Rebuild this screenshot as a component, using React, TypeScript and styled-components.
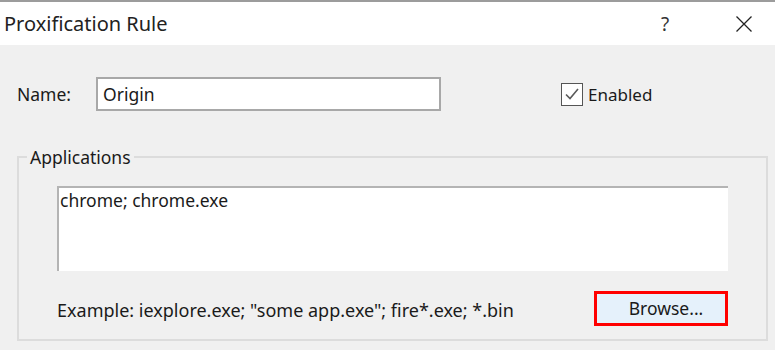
import styled, { createGlobalStyle } from 'styled-components';

const GlobalStyle = createGlobalStyle`
  html, body {
    margin: 0;
    padding: 0;
    background: #f0f0f0;
  }
  * {
    box-sizing: border-box;
  }
`;

const FONT = `'Noto Sans', 'Open Sans', sans-serif`;

function CheckIcon() {
  return (
    <svg width="18" height="18" viewBox="0 0 18 18">
      <path d="M3 9.5 L7 13.5 L15 4" fill="none" stroke="#5a5a5a" strokeWidth="1.6" />
    </svg>
  );
}

function CloseIcon() {
  return (
    <svg width="18" height="18" viewBox="0 0 18 18">
      <path d="M1.5 1.5 L16.5 16.5 M16.5 1.5 L1.5 16.5" stroke="#222" strokeWidth="1.3" />
    </svg>
  );
}

function App() {
  return (
    <>
      <GlobalStyle />
      <StWindow>
        <StTitleBar>
          <StTitle>Proxification Rule</StTitle>
          <StTitleButtons>
            <StHelp>?</StHelp>
            <StClose>
              <CloseIcon />
            </StClose>
          </StTitleButtons>
        </StTitleBar>
        <StBody>
          <StNameRow>
            <StLabel>Name:</StLabel>
            <StNameInput defaultValue="Origin" />
            <StCheckLabel>
              <StCheckBox>
                <CheckIcon />
              </StCheckBox>
              <span>Enabled</span>
            </StCheckLabel>
          </StNameRow>
          <StGroup>
            <StLegend>Applications</StLegend>
            <StGroupContent>
              <StAppsBox defaultValue="chrome; chrome.exe" />
              <StBottomRow>
                <StHint>Example: iexplore.exe; "some app.exe"; fire*.exe; *.bin</StHint>
                <StBrowse>Browse...</StBrowse>
              </StBottomRow>
            </StGroupContent>
          </StGroup>
        </StBody>
      </StWindow>
    </>
  );
}

export default App;

const StWindow = styled.div`
  width: 775px;
  height: 350px;
  border-top: 2px solid #9c9c9c;
  background: #f0f0f0;
  font-family: ${FONT};
  color: #1a1a1a;
  overflow: hidden;
`;

const StTitleBar = styled.div`
  display: flex;
  align-items: center;
  justify-content: space-between;
  height: 43px;
  padding-left: 4px;
  background: #ffffff;
`;

const StTitle = styled.div`
  font-size: 20px;
  color: #222;
  padding-bottom: 1px;
`;

const StTitleButtons = styled.div`
  display: flex;
  align-items: center;
  height: 100%;
`;

const StHelp = styled.div`
  width: 80px;
  margin-right: 8px;
  text-align: center;
  font-size: 19px;
  color: #333;
`;

const StClose = styled.div`
  display: flex;
  justify-content: center;
  align-items: center;
  width: 62px;
  height: 100%;
`;

const StBody = styled.div`
  padding: 32px 7px 0 17px;
`;

const StNameRow = styled.div`
  display: flex;
  align-items: center;
  height: 34px;
`;

const StLabel = styled.span`
  width: 79px;
  font-size: 17.5px;
`;

const StNameInput = styled.input`
  width: 345px;
  height: 34px;
  padding: 0 5px;
  border: 2px solid #a8a8a8;
  background: #fff;
  font-family: ${FONT};
  font-size: 17.5px;
  color: #1a1a1a;
  outline: none;
`;

const StCheckLabel = styled.label`
  display: flex;
  align-items: center;
  gap: 5px;
  margin-left: 120px;
  font-size: 17px;
`;

const StCheckBox = styled.span`
  display: flex;
  justify-content: center;
  align-items: center;
  width: 22px;
  height: 23px;
  border: 1.5px solid #555;
  background: #fff;
`;

const StGroup = styled.fieldset`
  height: 195px;
  margin: 35px 0 0 0;
  padding: 0;
  border: 2px solid #dcdcdc;
  border-radius: 0;
`;

const StLegend = styled.legend`
  margin-left: 8px;
  padding: 0 3px;
  font-size: 17.5px;
  line-height: 22px;
`;

const StGroupContent = styled.div`
  padding: 18px 0 0 38px;
`;

const StAppsBox = styled.textarea`
  display: block;
  width: 671px;
  height: 85px;
  padding: 2px 1px;
  border: none;
  border-top: 2px solid #b4b4b4;
  border-left: 2px solid #b4b4b4;
  background: #fff;
  resize: none;
  outline: none;
  font-family: ${FONT};
  font-size: 17.5px;
  color: #1a1a1a;
  line-height: 1.2;
`;

const StBottomRow = styled.div`
  display: flex;
  align-items: center;
  justify-content: space-between;
  width: 671px;
  margin-top: 20px;
`;

const StHint = styled.span`
  margin-top: 3px;
  font-size: 18px;
`;

const StBrowse = styled.button`
  width: 134px;
  height: 35px;
  padding: 0 0 2px 10px;
  border: 3px solid #ff0000;
  background: #e5f1fb;
  font-family: ${FONT};
  font-size: 17.5px;
  color: #1a1a1a;
`;
